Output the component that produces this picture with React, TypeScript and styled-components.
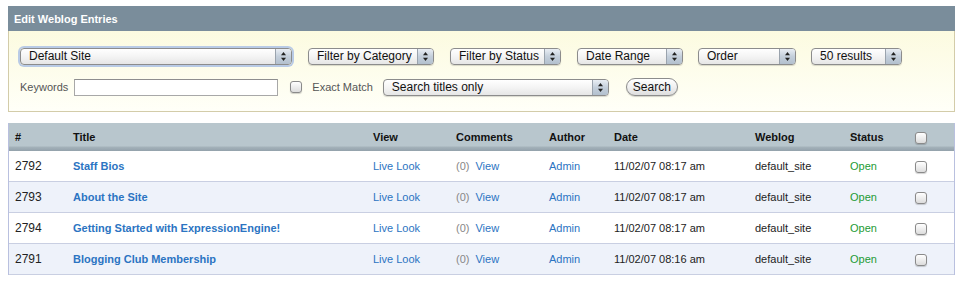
import React from "react";
import styled, { createGlobalStyle } from "styled-components";

const GlobalStyle = createGlobalStyle`
  body {
    margin: 6px 8px;
    background: #ffffff;
    font-family: "Liberation Sans", Arial, sans-serif;
    font-size: 11px;
    color: #222;
  }
`;

const Page = styled.div`
  width: 947px;
`;

const TitleBar = styled.div`
  height: 25px;
  display: flex;
  align-items: center;
  padding-left: 6px;
  background: #7a8d9b;
  color: #fff;
  font-weight: bold;
  font-size: 11px;
`;

const FilterPanel = styled.div`
  border: 1px solid #d3cca9;
  border-top: none;
  background: linear-gradient(#fcfbe0, #fffff8);
  padding: 16px 11px 15px 11px;
  display: flex;
  flex-direction: column;
  gap: 13px;
`;

const FilterRow = styled.div`
  display: flex;
  align-items: center;
  height: 18px;
`;

const SelectBox = styled.div<{ $w: number; $gap?: number; $focus?: boolean }>`
  width: ${(p) => p.$w}px;
  margin-right: ${(p) => p.$gap ?? 16}px;
  height: 17px;
  box-sizing: border-box;
  border: 1px solid #8c8c8c;
  border-radius: 4px;
  background: linear-gradient(#ffffff, #f4f4f4 50%, #e6e6e6);
  display: flex;
  align-items: center;
  font-family: "Liberation Sans", Arial, sans-serif;
  font-size: 12px;
  color: #111;
  box-shadow: ${(p) =>
    p.$focus ? "0 0 0 2px #b9cbe6" : "0 1px 1px rgba(0,0,0,0.15)"};
  overflow: hidden;
  flex: none;
`;

const SelectLabel = styled.span`
  flex: 1;
  padding-left: 8px;
  white-space: nowrap;
`;

const SelectArrows = styled.span`
  width: 15px;
  height: 100%;
  border-left: 1px solid #9aa3ad;
  background: linear-gradient(#e9eef4, #c4cfdb 50%, #b3c0ce);
  display: flex;
  align-items: center;
  justify-content: center;
`;

const FieldLabel = styled.span<{ $mr?: number }>`
  color: #555;
  font-size: 11px;
  margin-right: ${(p) => p.$mr ?? 6}px;
`;

const TextInput = styled.div`
  width: 204px;
  height: 17px;
  box-sizing: border-box;
  border: 1px solid #a8a8a8;
  border-top-color: #8e8e8e;
  background: #fff;
  margin-right: 12px;
`;

const Check = styled.span<{ $mr?: number }>`
  display: inline-block;
  width: 12px;
  height: 12px;
  box-sizing: border-box;
  border: 1px solid #8a8a8a;
  border-radius: 3px;
  background: linear-gradient(#ffffff, #ececec 55%, #dcdcdc);
  box-shadow: 0 1px 1px rgba(0, 0, 0, 0.18);
  margin-right: ${(p) => p.$mr ?? 0}px;
  flex: none;
  vertical-align: middle;
`;

const PillButton = styled.div`
  width: 52px;
  height: 18px;
  box-sizing: border-box;
  border: 1px solid #8c8c8c;
  border-radius: 9px;
  background: linear-gradient(#ffffff, #f0f0f0 50%, #dedede);
  box-shadow: 0 1px 1px rgba(0, 0, 0, 0.18);
  display: flex;
  align-items: center;
  justify-content: center;
  font-family: "Liberation Sans", Arial, sans-serif;
  font-size: 12px;
  color: #111;
`;

const Table = styled.div`
  margin-top: 11px;
  border-left: 1px solid #b9c0df;
  border-right: 1px solid #b9c0df;
`;

const cols = "58px 300px 83px 93px 65px 141px 95px 65px 1fr";

const HeaderRow = styled.div`
  display: grid;
  grid-template-columns: ${cols};
  align-items: center;
  height: 28px;
  padding-left: 6px;
  background: linear-gradient(#b8c6cd 0, #b8c6cd 82%, #a4b2ba 86%, #93a1ab 100%);
  font-weight: bold;
  color: #111;
`;

const BodyRow = styled.div<{ $alt: boolean }>`
  display: grid;
  grid-template-columns: ${cols};
  align-items: center;
  height: 30px;
  padding-left: 6px;
  border-bottom: 1px solid #c9cfe2;
  background: ${(p) => (p.$alt ? "#eef2fa" : "#ffffff")};
`;

const Num = styled.span`
  font-size: 12px;
  color: #222;
`;

const TitleLink = styled.span`
  color: #2b74c2;
  font-weight: bold;
`;

const Link = styled.span`
  color: #2b74c2;
`;

const Count = styled.span`
  color: #888;
  margin-right: 6px;
`;

const Status = styled.span`
  color: #1d9b34;
`;

const Arrows = () => (
  <svg width="5" height="9" viewBox="0 0 5 9">
    <path d="M2.5 0 L5 3.2 L0 3.2 Z" fill="#222" />
    <path d="M2.5 9 L5 5.8 L0 5.8 Z" fill="#222" />
  </svg>
);

const Select = ({
  label,
  w,
  gap,
  focus,
}: {
  label: string;
  w: number;
  gap?: number;
  focus?: boolean;
}) => (
  <SelectBox $w={w} $gap={gap} $focus={focus}>
    <SelectLabel>{label}</SelectLabel>
    <SelectArrows>
      <Arrows />
    </SelectArrows>
  </SelectBox>
);

const entries = [
  { id: 2792, title: "Staff Bios", date: "11/02/07 08:17 am" },
  { id: 2793, title: "About the Site", date: "11/02/07 08:17 am" },
  { id: 2794, title: "Getting Started with ExpressionEngine!", date: "11/02/07 08:17 am" },
  { id: 2791, title: "Blogging Club Membership", date: "11/02/07 08:16 am" },
];

export default function App() {
  return (
    <Page>
      <GlobalStyle />
      <TitleBar>Edit Weblog Entries</TitleBar>
      <FilterPanel>
        <FilterRow>
          <Select label="Default Site" w={272} gap={16} focus />
          <Select label="Filter by Category" w={126} />
          <Select label="Filter by Status" w={111} />
          <Select label="Date Range" w={106} gap={15} />
          <Select label="Order" w={98} gap={15} />
          <Select label="50 results" w={91} />
        </FilterRow>
        <FilterRow>
          <FieldLabel>Keywords</FieldLabel>
          <TextInput />
          <Check $mr={10} />
          <FieldLabel $mr={10}>Exact Match</FieldLabel>
          <Select label="Search titles only" w={226} gap={17} />
          <PillButton>Search</PillButton>
        </FilterRow>
      </FilterPanel>
      <Table>
        <HeaderRow>
          <span>#</span>
          <span>Title</span>
          <span>View</span>
          <span>Comments</span>
          <span>Author</span>
          <span>Date</span>
          <span>Weblog</span>
          <span>Status</span>
          <span>
            <Check />
          </span>
        </HeaderRow>
        {entries.map((e, i) => (
          <BodyRow key={e.id} $alt={i % 2 === 1}>
            <Num>{e.id}</Num>
            <TitleLink>{e.title}</TitleLink>
            <Link>Live Look</Link>
            <span>
              <Count>(0)</Count>
              <Link>View</Link>
            </span>
            <Link>Admin</Link>
            <span>{e.date}</span>
            <span>default_site</span>
            <Status>Open</Status>
            <span>
              <Check />
            </span>
          </BodyRow>
        ))}
      </Table>
    </Page>
  );
}
